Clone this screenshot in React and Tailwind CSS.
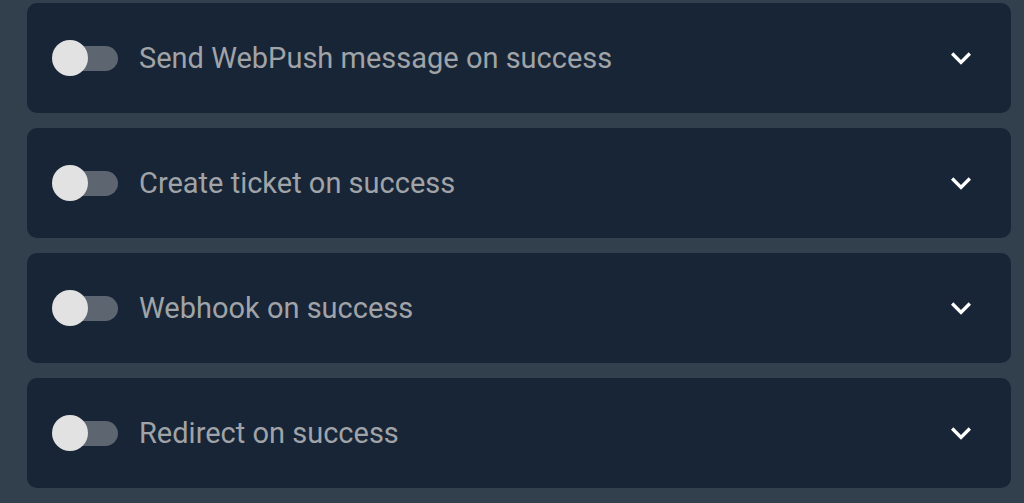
const items = [
  "Send WebPush message on success",
  "Create ticket on success",
  "Webhook on success",
  "Redirect on success",
];

function Toggle() {
  return (
    <div className="relative w-[66px] h-[36px] flex items-center shrink-0">
      <div className="absolute left-[7px] right-0 h-[25px] rounded-full bg-[#5c6570]" />
      <div className="absolute left-0 w-[36px] h-[36px] rounded-full bg-[#e2e2e2]" />
    </div>
  );
}

function ExpandMore() {
  return (
    <svg width="40" height="40" viewBox="0 0 24 24" fill="#ffffff">
      <path d="M16.59 8.59L12 13.17 7.41 8.59 6 10l6 6 6-6z" />
    </svg>
  );
}

export default function App() {
  return (
    <div className="w-[1024px] h-[503px] bg-[#323f4c] pl-[27px] pr-[13px] pt-[3px] flex flex-col gap-[15px] overflow-hidden font-['Roboto',sans-serif]">
      {items.map((label) => (
        <div
          key={label}
          className="h-[110px] shrink-0 rounded-[10px] bg-[#172536] flex items-center pl-[25px] pr-[30px]"
        >
          <Toggle />
          <span className="ml-[21px] flex-1 text-[29px] leading-none text-[#a0a3a7]">
            {label}
          </span>
          <ExpandMore />
        </div>
      ))}
    </div>
  );
}
